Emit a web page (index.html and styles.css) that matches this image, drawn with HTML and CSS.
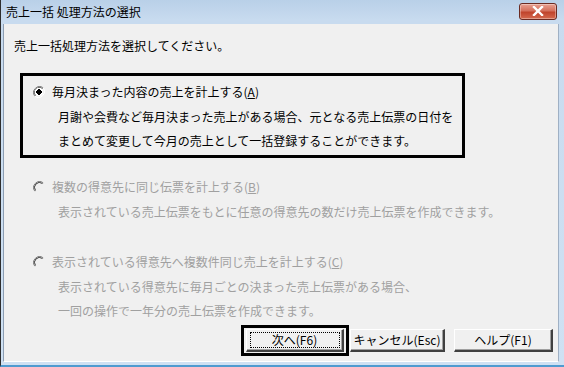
FILE: index.html
```html
<!DOCTYPE html>
<html lang="ja">
<head>
<meta charset="utf-8">
<link rel="stylesheet" href="styles.css">
</head>
<body>
<div class="window">
  <div class="titlebar">
    <span class="title">売上一括 処理方法の選択</span>
    <span class="close">
      <svg width="12" height="10" viewBox="0 0 12 10"><path d="M2 1 L10 9 M10 1 L2 9" stroke="#fff" stroke-width="2.4" stroke-linecap="square"/></svg>
    </span>
  </div>
  <div class="client">
    <div class="lead">売上一括処理方法を選択してください。</div>

    <div class="opt opt-a selected">
      <div class="opt-title">
        <svg class="radio" width="12" height="12" viewBox="0 0 12 12">
          <path d="M10.2 1.8 A6 6 0 0 0 1.8 10.2" fill="none" stroke="#808080" stroke-width="1"/>
          <path d="M9.5 2.5 A5 5 0 0 0 2.5 9.5" fill="none" stroke="#404040" stroke-width="1"/>
          <path d="M1.8 10.2 A6 6 0 0 0 10.2 1.8" fill="none" stroke="#ffffff" stroke-width="1"/>
          <circle cx="6" cy="6" r="4.3" fill="#fff"/>
          <rect x="4" y="4" width="4" height="4" fill="#000"/>
          <rect x="5" y="3" width="2" height="6" fill="#000"/>
          <rect x="3" y="5" width="6" height="2" fill="#000"/>
        </svg>
        <span>毎月決まった内容の売上を計上する(<u>A</u>)</span>
      </div>
      <div class="desc">月謝や会費など毎月決まった売上がある場合、元となる売上伝票の日付を</div>
      <div class="desc">まとめて変更して今月の売上として一括登録することができます。</div>
    </div>

    <div class="opt opt-b disabled">
      <div class="opt-title">
        <svg class="radio" width="12" height="12" viewBox="0 0 12 12">
          <path d="M10.2 1.8 A6 6 0 0 0 1.8 10.2" fill="none" stroke="#808080" stroke-width="1"/>
          <path d="M9.5 2.5 A5 5 0 0 0 2.5 9.5" fill="none" stroke="#404040" stroke-width="1"/>
        </svg>
        <span>複数の得意先に同じ伝票を計上する(<u>B</u>)</span>
      </div>
      <div class="desc">表示されている売上伝票をもとに任意の得意先の数だけ売上伝票を作成できます。</div>
    </div>

    <div class="opt opt-c disabled">
      <div class="opt-title">
        <svg class="radio" width="12" height="12" viewBox="0 0 12 12">
          <path d="M10.2 1.8 A6 6 0 0 0 1.8 10.2" fill="none" stroke="#808080" stroke-width="1"/>
          <path d="M9.5 2.5 A5 5 0 0 0 2.5 9.5" fill="none" stroke="#404040" stroke-width="1"/>
        </svg>
        <span>表示されている得意先へ複数件同じ売上を計上する(<u>C</u>)</span>
      </div>
      <div class="desc">表示されている得意先に毎月ごとの決まった売上伝票がある場合、</div>
      <div class="desc">一回の操作で一年分の売上伝票を作成できます。</div>
    </div>

    <div class="buttons">
      <div class="default-frame">
        <button class="btn btn-next"><span class="focus">次へ(F6)</span></button>
      </div>
      <button class="btn btn-cancel">キャンセル(Esc)</button>
      <button class="btn btn-help">ヘルプ(F1)</button>
    </div>
  </div>
</div>
</body>
</html>
```

FILE: styles.css
```css
html, body {
  margin: 0;
  padding: 0;
  width: 564px;
  height: 367px;
  overflow: hidden;
  background: #c9dcef;
}

body {
  font-family: "Noto Sans CJK JP", "Noto Sans", sans-serif;
  font-size: 12px;
  color: #000;
}

.window {
  width: 564px;
  height: 367px;
  box-sizing: border-box;
  border-left: 1px solid #2e2e2e;
  border-bottom: 2px solid #4f9bd0;
  display: flex;
  flex-direction: column;
  background: linear-gradient(to bottom, #b9d0e8 0px, #c8dbef 20px, #cfe1f3 100%);
}

.titlebar {
  height: 24px;
  flex: none;
  display: flex;
  align-items: center;
  justify-content: space-between;
  padding: 0 7px 0 5px;
  box-sizing: border-box;
}

.title {
  font-size: 12px;
  line-height: 16px;
  color: #000;
}

.close {
  width: 38px;
  height: 17px;
  margin-top: -2px;
  box-sizing: border-box;
  border: 1px solid #6b2b22;
  border-radius: 3px;
  background: linear-gradient(to bottom, #e8a192 0%, #d4705c 45%, #c0442c 55%, #d56a4f 100%);
  display: flex;
  align-items: center;
  justify-content: center;
  box-shadow: inset 0 0 0 1px rgba(255,255,255,0.35);
}

.client {
  flex: 1;
  min-height: 0;
  margin: 0 5px 3px 2px;
  background: #f0f0f0;
  border-left: 1px solid #8c9db2;
  border-right: 1px solid #9fb0c4;
  border-bottom: 1px solid #ffffff;
  padding: 14px 5px 0 10px;
  display: flex;
  flex-direction: column;
}

.lead {
  line-height: 16px;
}

.opt {
  margin-left: 6px;
  white-space: nowrap;
}

.opt-a {
  width: 445px;
  box-sizing: border-box;
  margin-top: 19px;
  border: 3px solid #000;
  padding: 8px 0 2px 10px;
}

.opt-b {
  margin-top: 10px;
  padding: 11px 0 0 13px;
}

.opt-c {
  margin-top: 19px;
  padding: 11px 0 0 13px;
}

.opt-title {
  display: flex;
  align-items: center;
  line-height: 16px;
  gap: 7px;
}

.opt-title u {
  text-decoration: underline;
  text-underline-offset: 1px;
}

.radio {
  flex: none;
  display: block;
}

.desc {
  padding-left: 25px;
  line-height: 24px;
}

.opt-title + .desc {
  margin-top: 5px;
}

.disabled {
  color: #a0a0a0;
}

.buttons {
  display: flex;
  justify-content: flex-end;
  align-items: center;
  margin-top: 2px;
}

.default-frame {
  border: 3px solid #000;
  padding: 1px 2px;
  background: #f0f0f0;
}

.btn {
  font-family: "Noto Sans CJK JP", "Noto Sans", sans-serif;
  font-size: 12px;
  height: 23px;
  margin: 0;
  padding: 0;
  background: #f0f0f0;
  color: #000;
  border-style: solid;
  border-width: 1px 2px 2px 1px;
  border-color: #ffffff #404040 #404040 #ffffff;
  box-shadow: inset -1px -1px 0 #a0a0a0;
  display: flex;
  align-items: center;
  justify-content: center;
  line-height: 16px;
}

.btn-next {
  width: 98px;
}

.focus {
  display: block;
  width: 88px;
  text-align: center;
  outline: 1px dotted #000;
  line-height: 14px;
}

.btn-cancel {
  width: 95px;
  margin-left: 1px;
}

.btn-help {
  width: 99px;
  margin-left: 9px;
}
```
